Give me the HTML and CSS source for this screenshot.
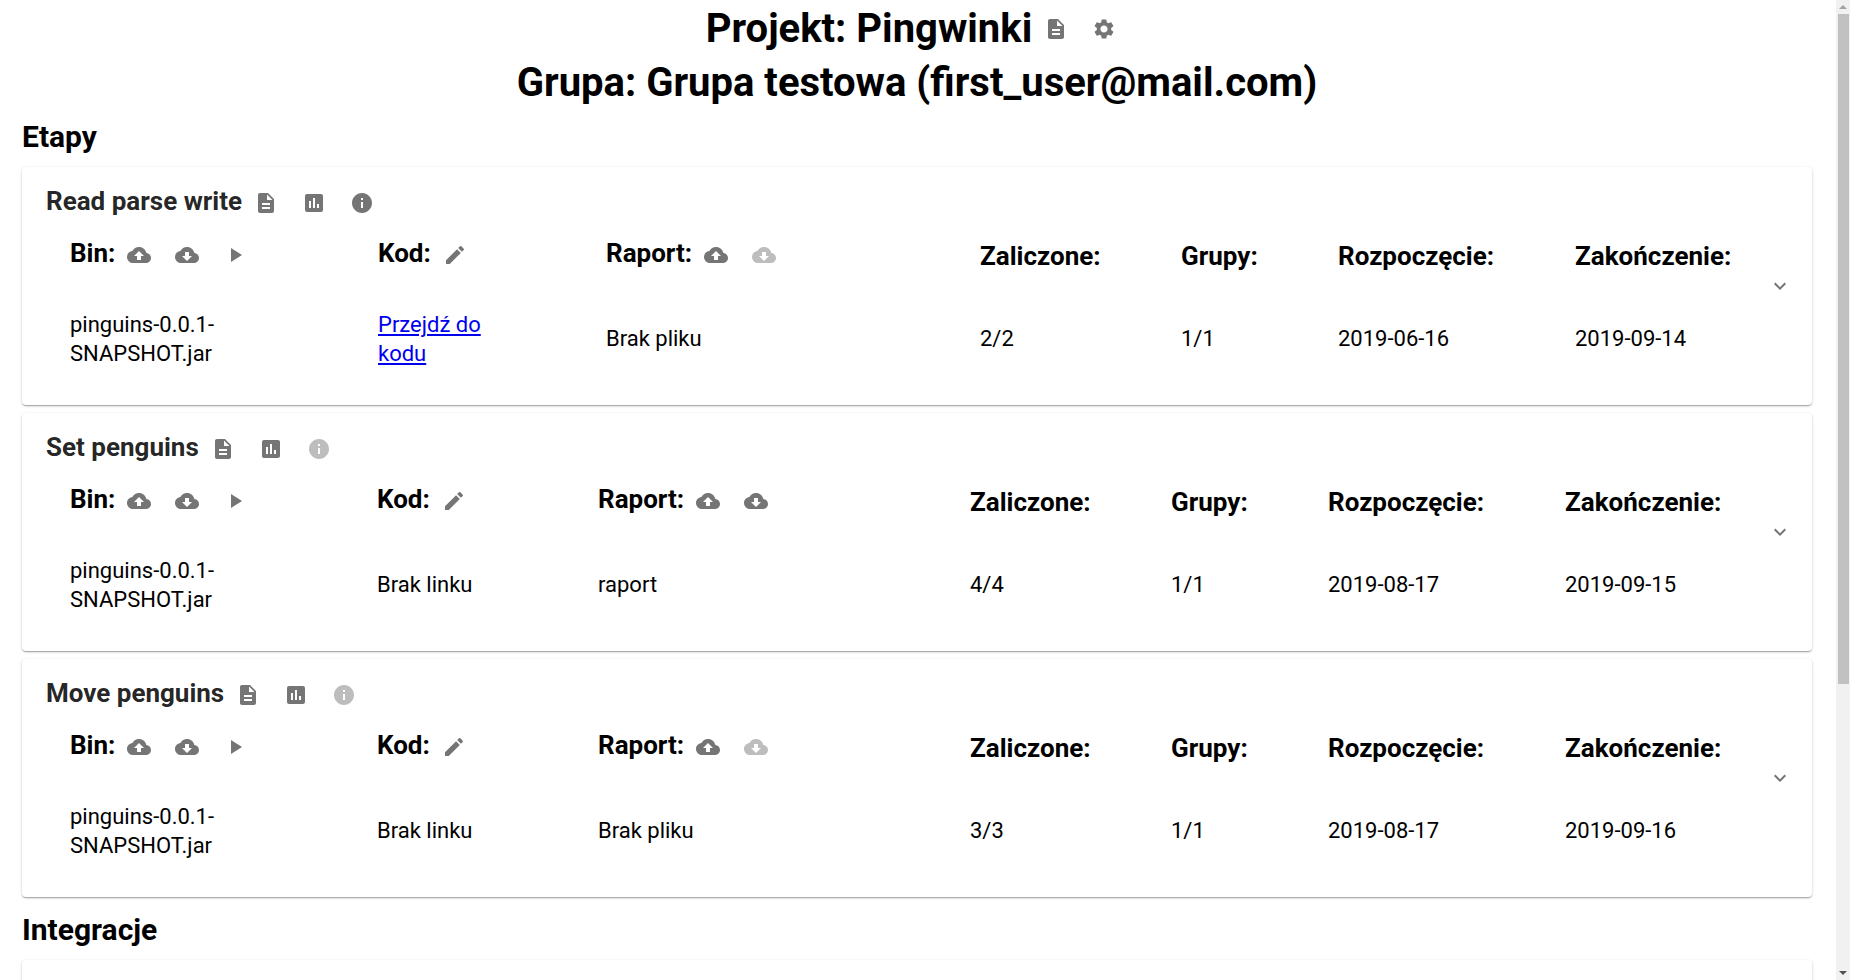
FILE: index.html
```html
<!DOCTYPE html>
<html lang="pl">

<head>
    <meta charset="UTF-8" />
    <title>Projekt: Pingwinki</title>
    <link rel="stylesheet" href="styles.css">
</head>

<body>
    <svg class="sprites" width="0" height="0">
        <defs>
            <symbol id="i-file" viewBox="0 0 24 24"><path d="M14 2H6c-1.1 0-1.99.9-1.99 2L4 20c0 1.1.89 2 1.99 2H18c1.1 0 2-.9 2-2V8l-6-6zm2 16H8v-2h8v2zm0-4H8v-2h8v2zm-3-5V3.5L18.5 9H13z"/></symbol>
            <symbol id="i-chart" viewBox="0 0 24 24"><path d="M19 3H5c-1.1 0-2 .9-2 2v14c0 1.1.9 2 2 2h14c1.1 0 2-.9 2-2V5c0-1.1-.9-2-2-2zM9 17H7v-7h2v7zm4 0h-2V7h2v10zm4 0h-2v-4h2v4z"/></symbol>
            <symbol id="i-info" viewBox="0 0 24 24"><path d="M12 2C6.48 2 2 6.48 2 12s4.48 10 10 10 10-4.48 10-10S17.52 2 12 2zm1 15h-2v-6h2v6zm0-8h-2V7h2v2z"/></symbol>
            <symbol id="i-up" viewBox="0 0 24 24"><path d="M19.35 10.04C18.67 6.59 15.64 4 12 4 9.11 4 6.6 5.64 5.35 8.04 2.34 8.36 0 10.91 0 14c0 3.31 2.69 6 6 6h13c2.76 0 5-2.24 5-5 0-2.64-2.05-4.78-4.65-4.96zM14 13v4h-4v-4H7l5-5 5 5h-3z"/></symbol>
            <symbol id="i-down" viewBox="0 0 24 24"><path d="M19.35 10.04C18.67 6.59 15.64 4 12 4 9.11 4 6.6 5.64 5.35 8.04 2.34 8.36 0 10.91 0 14c0 3.31 2.69 6 6 6h13c2.76 0 5-2.24 5-5 0-2.64-2.05-4.78-4.65-4.96zM17 13l-5 5-5-5h3V9h4v4h3z"/></symbol>
            <symbol id="i-play" viewBox="0 0 24 24"><path d="M8 5v14l11-7z"/></symbol>
            <symbol id="i-edit" viewBox="0 0 24 24"><path d="M3 17.25V21h3.75L17.81 9.94l-3.75-3.75L3 17.25zM20.71 7.04c.39-.39.39-1.02 0-1.41l-2.34-2.34c-.39-.39-1.02-.39-1.41 0l-1.83 1.83 3.75 3.75 1.83-1.83z"/></symbol>
            <symbol id="i-gear" viewBox="0 0 24 24"><path d="M19.14 12.94c.04-.3.06-.61.06-.94 0-.32-.02-.64-.07-.94l2.03-1.58c.18-.14.23-.41.12-.61l-1.92-3.32c-.12-.22-.37-.29-.59-.22l-2.39.96c-.5-.38-1.03-.7-1.62-.94l-.36-2.54c-.04-.24-.24-.41-.48-.41h-3.84c-.24 0-.43.17-.47.41l-.36 2.54c-.59.24-1.13.57-1.62.94l-2.39-.96c-.22-.08-.47 0-.59.22L2.74 8.87c-.12.21-.08.47.12.61l2.03 1.58c-.05.3-.09.63-.09.94s.02.64.07.94l-2.03 1.58c-.18.14-.23.41-.12.61l1.92 3.32c.12.22.37.29.59.22l2.39-.96c.5.38 1.03.7 1.62.94l.36 2.54c.05.24.24.41.48.41h3.84c.24 0 .44-.17.47-.41l.36-2.54c.59-.24 1.13-.56 1.62-.94l2.39.96c.22.08.47 0 .59-.22l1.92-3.32c.12-.22.07-.47-.12-.61l-2.01-1.58zM12 15.6c-1.98 0-3.6-1.62-3.6-3.6s1.62-3.6 3.6-3.6 3.6 1.62 3.6 3.6-1.62 3.6-3.6 3.6z"/></symbol>
            <symbol id="i-more" viewBox="0 0 24 24"><path d="M16.59 8.59L12 13.17 7.41 8.59 6 10l6 6 6-6z"/></symbol>
        </defs>
    </svg>

    <main class="page">
        <header class="page-header">
            <h1 class="page-title">Projekt: Pingwinki
                <span class="icon-btn"><svg class="icon"><use href="#i-file"/></svg></span>
                <span class="icon-btn"><svg class="icon"><use href="#i-gear"/></svg></span>
            </h1>
            <h1 class="page-title">Grupa: Grupa testowa (first_user@mail.com)</h1>
        </header>

        <h2 class="section-title">Etapy</h2>

        <section class="card">
            <h3 class="card__title">Read parse write
                <span class="icon-btn"><svg class="icon"><use href="#i-file"/></svg></span>
                <span class="icon-btn"><svg class="icon"><use href="#i-chart"/></svg></span>
                <span class="icon-btn"><svg class="icon"><use href="#i-info"/></svg></span>
            </h3>
            <div class="stage stage--link">
                <div class="stage__head">Bin:
                    <span class="icon-btn"><svg class="icon"><use href="#i-up"/></svg></span>
                    <span class="icon-btn"><svg class="icon"><use href="#i-down"/></svg></span>
                    <span class="icon-btn"><svg class="icon"><use href="#i-play"/></svg></span>
                </div>
                <div class="stage__head">Kod:
                    <span class="icon-btn"><svg class="icon"><use href="#i-edit"/></svg></span>
                </div>
                <div class="stage__head">Raport:
                    <span class="icon-btn"><svg class="icon"><use href="#i-up"/></svg></span>
                    <span class="icon-btn is-disabled"><svg class="icon"><use href="#i-down"/></svg></span>
                </div>
                <div class="stage__head stage__head--plain">Zaliczone:</div>
                <div class="stage__head stage__head--plain">Grupy:</div>
                <div class="stage__head stage__head--plain">Rozpoczęcie:</div>
                <div class="stage__head stage__head--plain">Zakończenie:</div>

                <div class="stage__cell stage__cell--narrow">pinguins-0.0.1-SNAPSHOT.jar</div>
                <div class="stage__cell stage__cell--narrow"><a href="#">Przejdź do kodu</a></div>
                <div class="stage__cell">Brak pliku</div>
                <div class="stage__cell">2/2</div>
                <div class="stage__cell">1/1</div>
                <div class="stage__cell">2019-06-16</div>
                <div class="stage__cell">2019-09-14</div>
            </div>
            <svg class="icon card__expand"><use href="#i-more"/></svg>
        </section>

        <section class="card">
            <h3 class="card__title">Set penguins
                <span class="icon-btn"><svg class="icon"><use href="#i-file"/></svg></span>
                <span class="icon-btn"><svg class="icon"><use href="#i-chart"/></svg></span>
                <span class="icon-btn is-disabled"><svg class="icon"><use href="#i-info"/></svg></span>
            </h3>
            <div class="stage">
                <div class="stage__head">Bin:
                    <span class="icon-btn"><svg class="icon"><use href="#i-up"/></svg></span>
                    <span class="icon-btn"><svg class="icon"><use href="#i-down"/></svg></span>
                    <span class="icon-btn"><svg class="icon"><use href="#i-play"/></svg></span>
                </div>
                <div class="stage__head">Kod:
                    <span class="icon-btn"><svg class="icon"><use href="#i-edit"/></svg></span>
                </div>
                <div class="stage__head">Raport:
                    <span class="icon-btn"><svg class="icon"><use href="#i-up"/></svg></span>
                    <span class="icon-btn"><svg class="icon"><use href="#i-down"/></svg></span>
                </div>
                <div class="stage__head stage__head--plain">Zaliczone:</div>
                <div class="stage__head stage__head--plain">Grupy:</div>
                <div class="stage__head stage__head--plain">Rozpoczęcie:</div>
                <div class="stage__head stage__head--plain">Zakończenie:</div>

                <div class="stage__cell stage__cell--narrow">pinguins-0.0.1-SNAPSHOT.jar</div>
                <div class="stage__cell">Brak linku</div>
                <div class="stage__cell">raport</div>
                <div class="stage__cell">4/4</div>
                <div class="stage__cell">1/1</div>
                <div class="stage__cell">2019-08-17</div>
                <div class="stage__cell">2019-09-15</div>
            </div>
            <svg class="icon card__expand"><use href="#i-more"/></svg>
        </section>

        <section class="card">
            <h3 class="card__title">Move penguins
                <span class="icon-btn"><svg class="icon"><use href="#i-file"/></svg></span>
                <span class="icon-btn"><svg class="icon"><use href="#i-chart"/></svg></span>
                <span class="icon-btn is-disabled"><svg class="icon"><use href="#i-info"/></svg></span>
            </h3>
            <div class="stage">
                <div class="stage__head">Bin:
                    <span class="icon-btn"><svg class="icon"><use href="#i-up"/></svg></span>
                    <span class="icon-btn"><svg class="icon"><use href="#i-down"/></svg></span>
                    <span class="icon-btn"><svg class="icon"><use href="#i-play"/></svg></span>
                </div>
                <div class="stage__head">Kod:
                    <span class="icon-btn"><svg class="icon"><use href="#i-edit"/></svg></span>
                </div>
                <div class="stage__head">Raport:
                    <span class="icon-btn"><svg class="icon"><use href="#i-up"/></svg></span>
                    <span class="icon-btn is-disabled"><svg class="icon"><use href="#i-down"/></svg></span>
                </div>
                <div class="stage__head stage__head--plain">Zaliczone:</div>
                <div class="stage__head stage__head--plain">Grupy:</div>
                <div class="stage__head stage__head--plain">Rozpoczęcie:</div>
                <div class="stage__head stage__head--plain">Zakończenie:</div>

                <div class="stage__cell stage__cell--narrow">pinguins-0.0.1-SNAPSHOT.jar</div>
                <div class="stage__cell">Brak linku</div>
                <div class="stage__cell">Brak pliku</div>
                <div class="stage__cell">3/3</div>
                <div class="stage__cell">1/1</div>
                <div class="stage__cell">2019-08-17</div>
                <div class="stage__cell">2019-09-16</div>
            </div>
            <svg class="icon card__expand"><use href="#i-more"/></svg>
        </section>

        <h2 class="section-title">Integracje</h2>

        <section class="card card--empty"></section>
    </main>

    <div class="scrollbar">
        <span class="scrollbar__arrow scrollbar__arrow--up"></span>
        <span class="scrollbar__thumb"></span>
        <span class="scrollbar__arrow scrollbar__arrow--down"></span>
    </div>
</body>

</html>
```

FILE: styles.css
```css
body {
    display: flex;
    height: 100vh;
    margin: 0;
    overflow: hidden;
    background-color: #fff;
    color: #000;
    font-family: Roboto, "Liberation Sans", sans-serif;
    font-size: 22px;
    line-height: 29px;
}

.sprites {
    position: absolute;
}

.page {
    flex: 1;
    min-width: 0;
    padding: 0 24px 0 22px;
    overflow: hidden;
}

.page-header {
    padding-top: 2px;
}

.page-title {
    display: flex;
    justify-content: center;
    align-items: center;
    height: 54px;
    margin: 0;
    font-size: 40px;
    font-weight: 700;
    line-height: 54px;
}

.section-title {
    height: 50px;
    margin: 2px 0 5px;
    font-size: 30px;
    font-weight: 700;
    line-height: 50px;
}

.icon {
    display: block;
    flex: none;
    width: 24px;
    height: 24px;
    fill: currentColor;
}

.icon-btn {
    display: flex;
    flex: none;
    justify-content: center;
    width: 48px;
    padding: 12px 0;
    color: #757575;
}

.icon-btn.is-disabled {
    color: #bdbdbd;
}

.card {
    position: relative;
    height: 238px;
    margin-bottom: 8px;
    padding: 12px 24px 0;
    box-sizing: border-box;
    border-radius: 4px;
    background-color: #fff;
    box-shadow: 0 1px 3px 0 rgba(0, 0, 0, 0.2), 0 1px 1px 0 rgba(0, 0, 0, 0.14), 0 2px 1px -1px rgba(0, 0, 0, 0.12);
}

.card--empty {
    height: 100px;
}

.card__title {
    display: flex;
    align-items: flex-start;
    height: 48px;
    margin: 0;
    color: rgba(0, 0, 0, 0.87);
    font-size: 26px;
    font-weight: 700;
    line-height: 45px;
}

.card__expand {
    position: absolute;
    top: 50%;
    right: 20px;
    margin-top: -12px;
    color: #757575;
}

.stage {
    display: grid;
    grid-template-columns: 307px 221px 372px 201px 157px 237px 200px;
    grid-template-rows: 61px 92px;
    margin: 4px 0 0 24px;
}

.stage--link {
    grid-template-columns: 308px 228px 374px 201px 157px 237px 200px;
}

.stage__head {
    display: flex;
    align-items: flex-start;
    height: 48px;
    font-size: 26px;
    font-weight: 700;
    line-height: 44px;
}

.stage__head--plain {
    padding-top: 3px;
}

.stage__cell {
    align-self: center;
}

.stage__cell--narrow {
    max-width: 150px;
    padding-top: 2px;
}

.scrollbar {
    display: flex;
    flex: none;
    flex-direction: column;
    width: 14px;
    background-color: #f1f1f1;
}

.scrollbar__arrow {
    flex: none;
    width: 0;
    height: 0;
    margin: 5px 3px;
    border-left: 4px solid transparent;
    border-right: 4px solid transparent;
}

.scrollbar__arrow--up {
    border-bottom: 4px solid #a3a3a3;
}

.scrollbar__arrow--down {
    margin-top: auto;
    border-top: 4px solid #505050;
}

.scrollbar__thumb {
    flex: none;
    height: 670px;
    margin-left: 2px;
    margin-right: 1px;
    background-color: #c1c1c1;
}
```
